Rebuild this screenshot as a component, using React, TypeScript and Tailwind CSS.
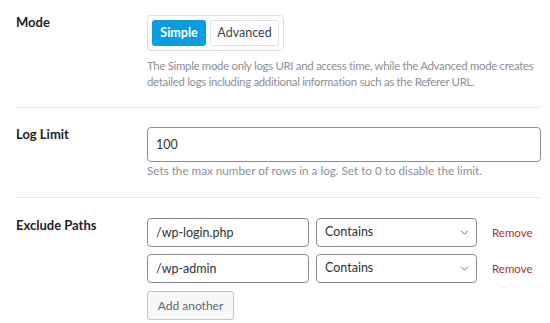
import { ChevronDown } from 'lucide-react'

const paths = ['/wp-login.php', '/wp-admin']

function Row({ label, children, last }: { label: string; children: React.ReactNode; last?: boolean }) {
  return (
    <div className={`flex ${last ? '' : 'border-b border-[#e5e5e5]'}`}>
      <div className="w-[131px] shrink-0 text-[13px] leading-[14px] font-bold text-[#1d2327]">{label}</div>
      <div className="flex-1">{children}</div>
    </div>
  )
}

export default function App() {
  return (
    <div className="h-[323px] w-[550px] overflow-hidden bg-white pl-4 pr-[9px] font-['Lato',sans-serif] text-[#3c434a]">
      <div className="pt-[15px]">
        <Row label="Mode">
          <div className="pb-[17px]">
            <div className="inline-flex gap-[4px] rounded-[4px] border border-[#dcdcde] p-[4px]">
              <button className="h-[26px] w-[54px] rounded-[3px] bg-[#0a9de0] text-[12.5px] font-bold text-white">Simple</button>
              <button className="h-[26px] w-[69px] rounded-[3px] border border-[#e0e0e0] bg-white text-[12.5px] text-[#3c434a]">Advanced</button>
            </div>
            <p className="mt-[7px] whitespace-nowrap text-[11.4px] leading-[16px] tracking-[-0.3px] text-[#8c8f94]">
              The Simple mode only logs URI and access time, while the Advanced mode creates
              <br />
              detailed logs including additional information such as the Referer URL.
            </p>
          </div>
        </Row>
      </div>
      <div className="pt-[19px]">
        <Row label="Log Limit">
          <div className="pb-[19px]">
            <input
              readOnly
              value="100"
              className="h-[35px] w-full rounded-[4px] border border-[#8c8f94] px-[8px] text-[12.5px] text-[#2c3338] outline-none"
            />
            <p className="text-[11.7px] leading-[16px] text-[#8c8f94]">
              Sets the max number of rows in a log. Set to 0 to disable the limit.
            </p>
          </div>
        </Row>
      </div>
      <div className="pt-[20px]">
        <Row label="Exclude Paths" last>
          <div className="flex flex-col gap-[7px]">
            {paths.map((p) => (
              <div key={p} className="flex items-center">
                <input
                  readOnly
                  value={p}
                  className="h-[29px] w-[162px] rounded-[4px] border border-[#8c8f94] px-[8px] text-[12.5px] text-[#2c3338] outline-none"
                />
                <div className="ml-[7px] flex h-[29px] w-[161px] items-center justify-between rounded-[4px] border border-[#8c8f94] pl-[8px] pr-[5px] text-[12.5px] text-[#2c3338]">
                  <span>Contains</span>
                  <ChevronDown size={13} strokeWidth={1.6} className="text-[#50575e]" />
                </div>
                <a className="ml-[15px] text-[11.5px] text-[#b32d2e]">Remove</a>
              </div>
            ))}
            <div className="mt-[1px]">
              <button className="h-[29px] w-[87px] rounded-[3px] border border-[#c3c4c7] bg-[#f6f7f7] text-[12px] text-[#646970]">Add another</button>
            </div>
          </div>
        </Row>
      </div>
    </div>
  )
}
